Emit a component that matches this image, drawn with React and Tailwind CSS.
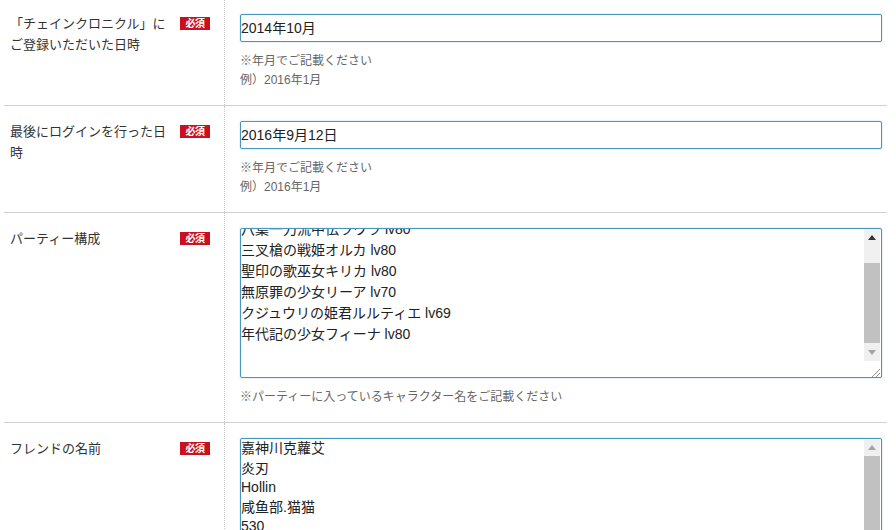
import React from "react";

const font = { fontFamily: '"Liberation Sans", "Noto Sans CJK JP", sans-serif' };

function Badge() {
  return (
    <span className="flex items-center justify-center w-[30px] h-[13px] bg-[#c8101e] text-white text-[10px] font-bold leading-none tracking-[-0.5px]">
      必須
    </span>
  );
}

function Label({ lines, pt }) {
  return (
    <div className={`w-[221px] shrink-0 flex items-start justify-between pl-[6px] pr-[14px] border-r border-dotted border-[#c8c8c8] ${pt}`}>
      <div className="text-[13px] leading-[21px] text-[#333] whitespace-nowrap">
        {lines.map((l, i) => (
          <div key={i}>{l}</div>
        ))}
      </div>
      <div className="flex pt-[4px]">
        <Badge />
      </div>
    </div>
  );
}

function Input({ value }) {
  return (
    <div className="h-[28px] w-full border border-[#4796bd] rounded-[2px] shadow-[0_0_2px_rgba(102,175,233,0.5)] bg-white flex items-center text-[14px] text-[#222]">
      {value}
    </div>
  );
}

function Help({ lines }) {
  return (
    <div className="mt-[10px] text-[12px] leading-[19px] text-[#666]">
      {lines.map((l, i) => (
        <div key={i}>{l}</div>
      ))}
    </div>
  );
}

function Arrow({ up, color }) {
  return (
    <svg width="8" height="5" viewBox="0 0 8 5">
      {up ? <polygon points="0,5 8,5 4,0" fill={color} /> : <polygon points="0,0 8,0 4,5" fill={color} />}
    </svg>
  );
}

function FakeTextarea({ lines, offset, leading, h, variant }) {
  return (
    <div className={`w-full ${h} border border-[#4796bd] rounded-[2px] shadow-[0_0_2px_rgba(102,175,233,0.5)] bg-white flex overflow-hidden`}>
      <div className="flex-1 overflow-hidden text-[14px] text-[#222]">
        <div className={`${offset} ${leading}`}>
          {lines.map((l, i) => (
            <div key={i} className="whitespace-nowrap">{l}</div>
          ))}
        </div>
      </div>
      {variant === "a" ? (
        <div className="w-[16px] shrink-0 flex flex-col mr-[1px]">
          <div className="flex-1 bg-[#f0f0f0] flex flex-col">
            <div className="h-[17px] flex items-center justify-center">
              <Arrow up color="#333" />
            </div>
            <div className="h-[17px]" />
            <div className="h-[80px] bg-[#c1c1c1]" />
            <div className="flex-1 flex items-center justify-center">
              <Arrow color="#a3a3a3" />
            </div>
          </div>
          <div className="h-[16px] bg-white relative">
            <svg className="absolute right-0 bottom-0" width="10" height="10" viewBox="0 0 10 10">
              <line x1="2" y1="10" x2="10" y2="2" stroke="#777" strokeWidth="0.8" />
              <line x1="6" y1="10" x2="10" y2="6" stroke="#777" strokeWidth="0.8" />
            </svg>
          </div>
        </div>
      ) : (
        <div className="w-[16px] shrink-0 flex flex-col mr-[1px] bg-[#f0f0f0]">
          <div className="h-[17px] flex items-center justify-center">
            <Arrow up color="#a3a3a3" />
          </div>
          <div className="flex-1 bg-[#c1c1c1]" />
        </div>
      )}
    </div>
  );
}

function Row({ children, label, labelPt, fieldPt, pb }) {
  return (
    <div className="flex border-b border-[#d0d0d0]">
      <Label lines={label} pt={labelPt} />
      <div className={`flex-1 pl-[15px] pr-[5px] ${fieldPt} ${pb}`}>{children}</div>
    </div>
  );
}

export default function App() {
  return (
    <div className="w-[896px] h-[530px] overflow-hidden bg-white" style={font}>
      <div className="ml-[4px] w-[883px]">
        <Row label={["「チェインクロニクル」に", "ご登録いただいた日時"]} labelPt="pt-[13px]" fieldPt="pt-[14px]" pb="pb-[15px]">
          <Input value="2014年10月" />
          <Help lines={["※年月でご記載ください", "例）2016年1月"]} />
        </Row>
        <Row label={["最後にログインを行った日", "時"]} labelPt="pt-[15px]" fieldPt="pt-[15px]" pb="pb-[15px]">
          <Input value="2016年9月12日" />
          <Help lines={["※年月でご記載ください", "例）2016年1月"]} />
        </Row>
        <Row label={["パーティー構成"]} labelPt="pt-[15px]" fieldPt="pt-[15px]" pb="pb-[15px]">
          <FakeTextarea
            variant="a"
            h="h-[150px]"
            offset="-mt-[10px]"
            leading="leading-[21px]"
            lines={[
              "八葉一刀流中伝ラウラ lv80",
              "三叉槍の戦姫オルカ lv80",
              "聖印の歌巫女キリカ lv80",
              "無原罪の少女リーア lv70",
              "クジュウリの姫君ルルティエ lv69",
              "年代記の少女フィーナ lv80",
            ]}
          />
          <div className="mt-[10px] text-[12px] leading-[19px] text-[#666]">
            ※パーティーに入っているキャラクター名をご記載ください
          </div>
        </Row>
        <Row label={["フレンドの名前"]} labelPt="pt-[15px]" fieldPt="pt-[15px]" pb="pb-[15px]">
          <FakeTextarea
            variant="b"
            h="h-[150px]"
            offset="mt-[0px]"
            leading="leading-[19.5px]"
            lines={["嘉神川克蘿艾", "炎刃", "Hollin", "咸鱼部.猫猫", "530", "", ""]}
          />
        </Row>
      </div>
    </div>
  );
}
